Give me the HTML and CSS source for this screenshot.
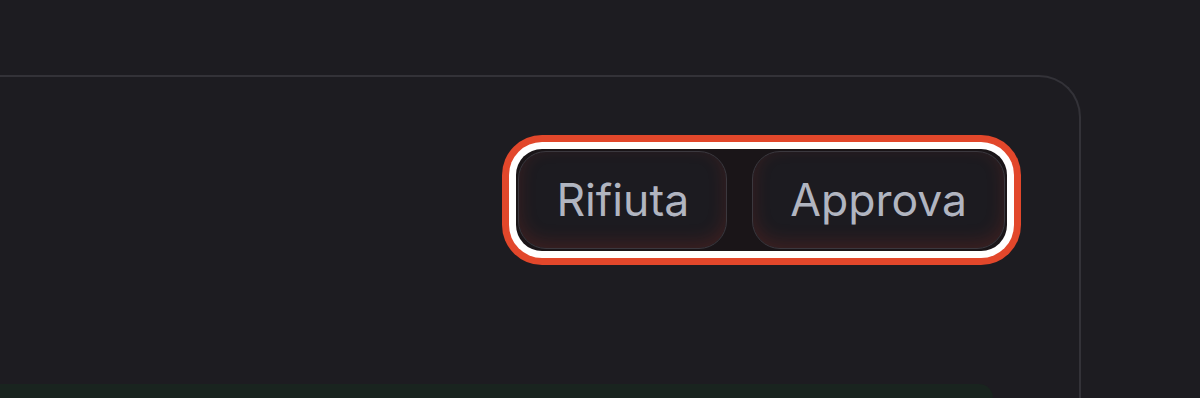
FILE: index.html
```html
<!DOCTYPE html>
<html lang="it">
<head>
<meta charset="utf-8">
<title>Azioni</title>
<link rel="stylesheet" href="styles.css">
</head>
<body>
  <main class="page">
    <section class="card">
      <div class="card-head">
        <div class="actions">
          <button class="btn">Rifiuta</button>
          <button class="btn">Approva</button>
        </div>
      </div>
      <div class="status-bar"></div>
    </section>
  </main>
</body>
</html>
```

FILE: styles.css
```css
html, body {
  margin: 0;
  padding: 0;
  background: #1d1c21;
  height: 100%;
  overflow: hidden;
}
.page {
  padding-top: 75px;
  width: 1200px;
  height: 398px;
  box-sizing: border-box;
}
.card {
  margin-left: -60px;
  width: 1141px;
  height: 323px;
  box-sizing: border-box;
  border: 2px solid #333238;
  border-bottom: none;
  border-radius: 0 42px 0 0;
  background: #1d1c21;
  display: flex;
  flex-direction: column;
}
.card-head {
  display: flex;
  justify-content: flex-end;
  padding: 72px 72px 0 0;
}
.actions {
  display: flex;
  gap: 25px;
  padding: 2px;
  border-radius: 26px;
  background: #1a1518;
  box-shadow: 0 0 0 7px #ffffff, 0 0 0 14px #e2472b;
}
.btn {
  height: 98px;
  padding: 0 37px;
  border: 1px solid #3b383e;
  border-radius: 28px;
  background: #1c1b20;
  box-shadow: inset 0 -6px 18px rgba(190, 50, 35, 0.2);
  color: #b1b5c0;
  font-family: Inter, "Noto Sans", sans-serif;
  font-size: 44.5px;
  font-weight: 400;
  cursor: pointer;
}
.status-bar {
  margin: auto 86px 0 0;
  height: 14px;
  flex: none;
  background: #19241f;
  border-radius: 0 30px 0 0;
}
```
